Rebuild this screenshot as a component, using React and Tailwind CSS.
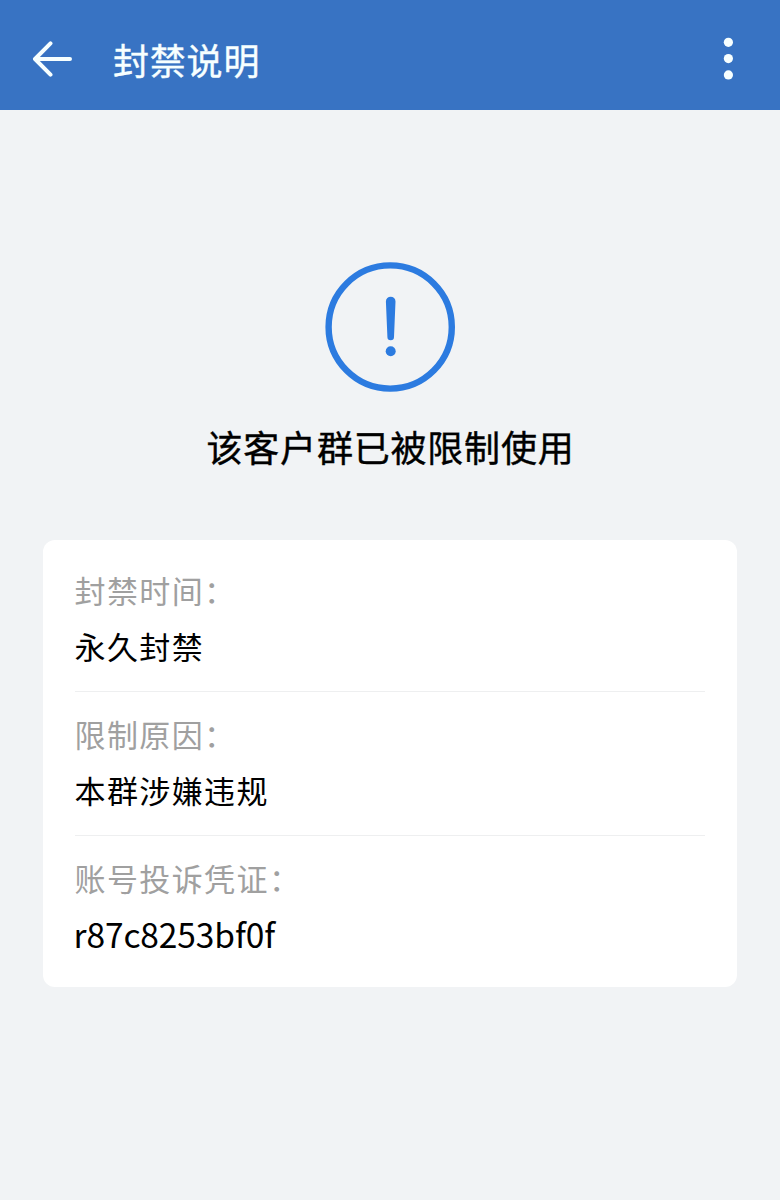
const details = [
  { label: '封禁时间：', value: '永久封禁' },
  { label: '限制原因：', value: '本群涉嫌违规' },
  { label: '账号投诉凭证：', value: 'r87c8253bf0f', code: true },
]

function BackIcon() {
  return (
    <svg width="40" height="36" viewBox="0 0 40 36" fill="none" stroke="currentColor" strokeWidth="4" strokeLinecap="round" strokeLinejoin="round">
      <path d="M18.5 2.3 3 18l15.5 15.7M3.5 18h34.5" />
    </svg>
  )
}

function MoreIcon() {
  return (
    <svg width="10" height="44" viewBox="0 0 10 44" fill="currentColor">
      <circle cx="5.4" cy="5.3" r="4.6" />
      <circle cx="5.4" cy="21.6" r="4.6" />
      <circle cx="5.4" cy="37.9" r="4.6" />
    </svg>
  )
}

function NoticeIcon() {
  return (
    <svg width="130" height="130" viewBox="0 0 130 130" className="text-[#2c7be0]">
      <circle cx="65.2" cy="65" r="61.6" fill="none" stroke="currentColor" strokeWidth="6.4" />
      <path d="M60.9 39.5a4.8 4.8 0 0 1 9.6 0L69 75a3.3 3.3 0 0 1-6.6 0Z" fill="currentColor" />
      <circle cx="65.7" cy="89.3" r="5" fill="currentColor" />
    </svg>
  )
}

export default function App() {
  return (
    <div className="min-h-screen bg-[#f1f3f5] font-['Noto_Sans_CJK_SC',sans-serif] text-black" lang="zh-CN">
      <header className="flex h-[110px] items-center bg-[#3873c3] pt-2 pr-[47px] pl-8 text-[#f7ffff]">
        <button aria-label="返回"><BackIcon /></button>
        <h1 className="ml-[41px] flex-1 text-[36px] leading-[50px] tracking-[0.8px] [-webkit-text-stroke:0.4px]">封禁说明</h1>
        <button aria-label="更多"><MoreIcon /></button>
      </header>

      <main className="px-[43px] pt-[152px]">
        <div className="flex flex-col items-center">
          <NoticeIcon />
          <h2 className="mt-7 pl-px text-[36px] leading-[52px] tracking-[0.8px] [-webkit-text-stroke:0.4px]">该客户群已被限制使用</h2>
        </div>

        <dl className="mt-[68px] rounded-xl bg-white px-8 py-2">
          {details.map(item => (
            <div key={item.label} className="border-b border-[#eeeff0] pt-3.5 pb-[17px] text-[31px] leading-[56px] tracking-[1.4px] last:border-b-0">
              <dt className="-ml-[0.5px] text-[#a0a0a0]">{item.label}</dt>
              <dd className={item.code ? '-ml-[1.5px] text-[33.5px] tracking-[-0.1px]' : '-ml-[0.5px]'}>{item.value}</dd>
            </div>
          ))}
        </dl>
      </main>
    </div>
  )
}
